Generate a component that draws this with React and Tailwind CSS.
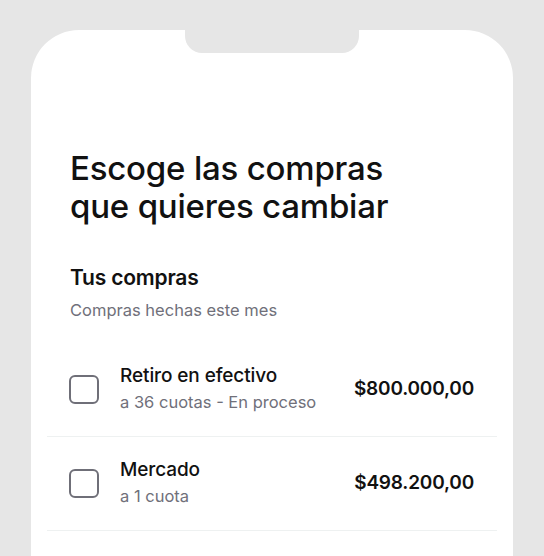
export default function App() {
  const items = [
    { title: "Retiro en efectivo", sub: "a 36 cuotas - En proceso", amount: "$800.000,00" },
    { title: "Mercado", sub: "a 1 cuota", amount: "$498.200,00" },
  ];
  return (
    <div
      className="w-[544px] h-[556px] bg-[#e6e6e6] overflow-hidden pt-[30px] px-[31px]"
      style={{ fontFamily: "Inter, 'Noto Sans', sans-serif" }}
    >
      <div className="relative bg-white rounded-t-[48px] h-[600px]">
        <div className="absolute top-0 left-[154px] w-[174px] h-[23px] bg-[#e6e6e6] rounded-b-[17px]" />
        <div className="pt-[119px] pl-[39px]">
          <h1 className="text-[33px] leading-[38px] font-medium text-[#111111] tracking-[-0.2px]">
            Escoge las compras
            <br />
            que quieres cambiar
          </h1>
          <h2 className="mt-[40px] text-[21px] leading-[26px] font-semibold text-[#111111] tracking-[-0.2px]">
            Tus compras
          </h2>
          <p className="mt-[8px] text-[16.5px] leading-[22px] text-[#70707a]">Compras hechas este mes</p>
        </div>
        <div className="mt-[22px] mx-[16px]">
          {items.map((it) => (
            <div
              key={it.title}
              className="h-[94px] border-b border-[#eef1f1] flex items-center pl-[22px] pr-[23px]"
            >
              <div className="w-[30px] h-[29px] rounded-[6px] border-2 border-[#6f6f78] shrink-0" />
              <div className="ml-[21px] flex-1 -mt-[2px]">
                <div className="text-[19px] leading-[24px] font-medium text-[#111111] tracking-[-0.1px]">{it.title}</div>
                <div className="mt-[3px] text-[16.5px] leading-[22px] text-[#70707a]">{it.sub}</div>
              </div>
              <div className="text-[19px] font-semibold text-[#111111] tracking-[-0.2px]">{it.amount}</div>
            </div>
          ))}
        </div>
      </div>
    </div>
  );
}
